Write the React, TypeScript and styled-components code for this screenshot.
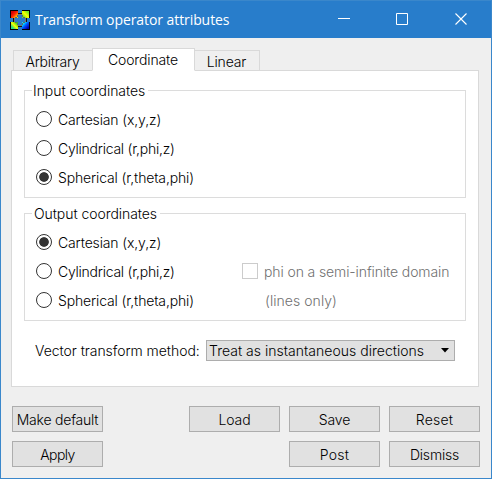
import React from 'react';
import styled, { createGlobalStyle } from 'styled-components';

const GlobalStyle = createGlobalStyle`
  *, *::before, *::after { box-sizing: border-box; }
  body { margin: 0; background: #fff; }
`;

const Window = styled.main`
  display: flex;
  flex-direction: column;
  width: 492px;
  height: 479px;
  border: 1px solid #3a87cb;
  background: #efefef;
  color: #000;
  font: 300 14px/18px Inter, "Liberation Sans", sans-serif;
  white-space: nowrap;
`;

const TitleBar = styled.header`
  display: flex;
  align-items: center;
  flex: none;
  height: 37px;
  padding-left: 9px;
  background: #287dcb;
  color: #fff;
`;

const Title = styled.h1`
  flex: 1;
  margin: 1px 0 0 5px;
  font: 400 14px/20px "Open Sans", "Noto Sans", sans-serif;
  letter-spacing: -0.08px;
`;

const Controls = styled.div`
  display: flex;
  gap: 46px;
  margin-right: 23px;
`;

const ControlButton = styled.button`
  display: flex;
  width: 13px;
  height: 13px;
  padding: 0;
  border: 0;
  background: none;
  color: inherit;
`;

const Content = styled.div`
  display: flex;
  flex-direction: column;
  padding: 10px 11px 0 10px;
`;

const TabList = styled.div`
  display: flex;
  align-items: flex-end;
  height: 23px;
  margin-bottom: -1px;
  padding-left: 2px;
  z-index: 1;
`;

const Tab = styled.button<{ $active?: boolean; $width: number }>`
  position: relative;
  z-index: ${p => (p.$active ? 1 : 0)};
  width: ${p => p.$width}px;
  height: ${p => (p.$active ? 23 : 21)}px;
  margin-right: -1px;
  padding: ${p => (p.$active ? '2px 1px 2px 0' : '2px 1px 0 0')};
  border: 1px solid #d9d9d9;
  border-bottom-color: ${p => (p.$active ? '#fff' : '#d9d9d9')};
  background: ${p => (p.$active ? '#fff' : '#efefef')};
  color: inherit;
  font: inherit;
`;

const Text = styled.span<{ $spacing?: number }>`
  letter-spacing: ${p => p.$spacing ?? 0}px;
`;

const Panel = styled.section`
  display: flex;
  flex-direction: column;
  gap: 15px;
  width: 468px;
  height: 317px;
  padding: 19px 12px;
  border: 1px solid #d9d9d9;
  background: #fff;
`;

const Group = styled.div`
  position: relative;
  display: grid;
  grid-template-columns: 206px 1fr;
  grid-auto-rows: 29px;
  flex: none;
  height: 108px;
  padding: 13px 0 0 11px;
  border: 1px solid #dcdcdc;
`;

const Legend = styled.div<{ $width: number; $inset?: number }>`
  position: absolute;
  top: -9px;
  left: 7px;
  width: ${p => p.$width}px;
  padding-left: ${p => p.$inset ?? 1}px;
  background: #fff;
`;

const Option = styled.label<{ $column?: number; $disabled?: boolean }>`
  display: flex;
  align-items: center;
  gap: 6px;
  grid-column: ${p => p.$column ?? 1};
  color: ${p => (p.$disabled ? '#707070' : 'inherit')};
  ${Text} { padding-top: 2px; }
`;

const Radio = styled.input.attrs({ type: 'radio' })`
  appearance: none;
  width: 16px;
  height: 16px;
  margin: 0;
  border: 1px solid #333;
  border-radius: 50%;
  background: #fff;
  &:checked { background: radial-gradient(circle at center, #333 4.4px, #fff 5.2px); }
`;

const Checkbox = styled.input.attrs({ type: 'checkbox' })`
  appearance: none;
  width: 16px;
  height: 16px;
  margin: 0;
  border: 1px solid #ccc;
  background: #fff;
`;

const Note = styled.div`
  grid-column: 2;
  padding: 7px 0 0 23px;
  color: #707070;
`;

const MethodRow = styled.div`
  display: flex;
  align-items: center;
  height: 21px;
  margin-top: 4px;
  padding-left: 11px;
`;

const MethodLabel = styled.span`
  width: 171px;
  padding-top: 1px;
`;

const Select = styled.button`
  display: flex;
  align-items: center;
  justify-content: space-between;
  width: 249px;
  height: 21px;
  padding: 1px 5px 0 2px;
  border: 1px solid #adadad;
  background: #e1e1e1;
  color: inherit;
  font: inherit;
  svg { margin-bottom: 1px; }
`;

const Actions = styled.footer`
  display: grid;
  grid-template-columns: 168px 91px 91px 91px;
  gap: 9px;
  margin: 19px 0 0 1px;
`;

const ActionButton = styled.button<{ $column: number }>`
  grid-column: ${p => p.$column};
  width: 91px;
  height: 26px;
  padding: 1px 0 0;
  border: 1px solid #adadad;
  background: #e1e1e1;
  color: inherit;
  font: inherit;
`;

const iconColors = [
  ['red', '#d80000', '#ff2800', '#ffd800'],
  ['green', '#20d8d0', '#70f020', '#ffff00'],
  ['yellow', '#20e080', '#ffff00', '#20e020'],
  ['blue', '#00e8ff', '#0050ff', '#0000b0'],
];

const AppIcon = () => (
  <svg width="20" height="20" viewBox="0 0 20 20" shapeRendering="crispEdges">
    <defs>
      {iconColors.map(([id, from, mid, to]) => {
        const rising = id === 'green' || id === 'yellow';
        return (
          <linearGradient key={id} id={id} x1="0" y1={rising ? 1 : 0} x2="1" y2={rising ? 0 : 1}>
            <stop offset="0.2" stopColor={id === 'green' ? mid : from} />
            <stop offset="0.5" stopColor={id === 'green' ? to : mid} />
            <stop offset="0.85" stopColor={id === 'green' ? mid : to} />
          </linearGradient>
        );
      })}
    </defs>
    <path d="M0 0h8v1H1v7H0zM12 0h8v8h-1V1h-7zM0 12h1v7h7v1H0zM19 12h1v8h-8v-1h7z" fill="#000" />
    <path d="M1 1h7v7H1z" fill="url(#red)" />
    <path d="M12 1h7v7h-7z" fill="url(#green)" />
    <path d="M1 12h7v7H1z" fill="url(#yellow)" />
    <path d="M12 12h7v7h-7z" fill="url(#blue)" />
    <path d="M8 4.5h4M8 15.5h4M4.5 8v4M15.5 8v4" stroke="#777" />
    <path d="M8 3.5h4M8 16.5h4M3.5 8v4M16.5 8v4" stroke="#111" />
    <path d="M7 5h1v2H7v1H5V7h2zM12 5h1v2h2v1h-2V7h-1zM5 12h2v1h1v2H7v-2H5zM13 12h2v1h-2v2h-1v-2h1z" fill="#666" />
  </svg>
);

const actions = [
  { label: 'Make default', spacing: -0.22, column: 1 },
  { label: 'Load', spacing: -0.1, column: 2 },
  { label: 'Save', spacing: -0.1, column: 3 },
  { label: 'Reset', spacing: 0.2, column: 4 },
  { label: 'Apply', spacing: -0.6, column: 1 },
  { label: 'Post', spacing: 0.25, column: 3 },
  { label: 'Dismiss', spacing: -0.2, column: 4 },
];

export default function App() {
  return (
    <>
      <GlobalStyle />
      <Window>
        <TitleBar>
          <AppIcon />
          <Title>Transform operator attributes</Title>
          <Controls>
            <ControlButton aria-label="Minimize">
              <svg width="13" height="13"><path d="M1 5.5h12" stroke="#fff" /></svg>
            </ControlButton>
            <ControlButton aria-label="Maximize">
              <svg width="13" height="13"><path d="M.5.5h11v11H.5z" stroke="#fff" fill="none" /></svg>
            </ControlButton>
            <ControlButton aria-label="Close">
              <svg width="13" height="13"><path d="M.5.5l11 11M11.5.5l-11 11" stroke="#fff" strokeWidth="1.1" /></svg>
            </ControlButton>
          </Controls>
        </TitleBar>
        <Content>
          <TabList>
            <Tab $width={80}><Text $spacing={-0.25}>Arbitrary</Text></Tab>
            <Tab $width={103} $active><Text $spacing={-0.14}>Coordinate</Text></Tab>
            <Tab $width={66}><Text $spacing={-0.15}>Linear</Text></Tab>
          </TabList>
          <Panel>
            <Group>
              <Legend $width={116}><Text $spacing={-0.04}>Input coordinates</Text></Legend>
              <Option>
                <Radio name="input" />
                <Text $spacing={-0.14}>Cartesian (x,y,z)</Text>
              </Option>
              <Option>
                <Radio name="input" />
                <Text $spacing={-0.25}>Cylindrical (r,phi,z)</Text>
              </Option>
              <Option>
                <Radio name="input" defaultChecked />
                <Text $spacing={-0.14}>Spherical (r,theta,phi)</Text>
              </Option>
            </Group>
            <Group>
              <Legend $width={128} $inset={2}><Text $spacing={-0.06}>Output coordinates</Text></Legend>
              <Option>
                <Radio name="output" defaultChecked />
                <Text $spacing={-0.14}>Cartesian (x,y,z)</Text>
              </Option>
              <Option>
                <Radio name="output" />
                <Text $spacing={-0.25}>Cylindrical (r,phi,z)</Text>
              </Option>
              <Option $column={2} $disabled>
                <Checkbox disabled />
                <Text $spacing={-0.11}>phi on a semi-infinite domain</Text>
              </Option>
              <Option>
                <Radio name="output" />
                <Text $spacing={-0.14}>Spherical (r,theta,phi)</Text>
              </Option>
              <Note><Text $spacing={0.05}>(lines only)</Text></Note>
            </Group>
            <MethodRow>
              <MethodLabel><Text $spacing={-0.05}>Vector transform method:</Text></MethodLabel>
              <Select>
                <Text $spacing={0.02}>Treat as instantaneous directions</Text>
                <svg width="8" height="5"><path d="M0 0h8L4 4.6z" /></svg>
              </Select>
            </MethodRow>
          </Panel>
          <Actions>
            {actions.map(a => (
              <ActionButton key={a.label} $column={a.column}>
                <Text $spacing={a.spacing}>{a.label}</Text>
              </ActionButton>
            ))}
          </Actions>
        </Content>
      </Window>
    </>
  );
}
